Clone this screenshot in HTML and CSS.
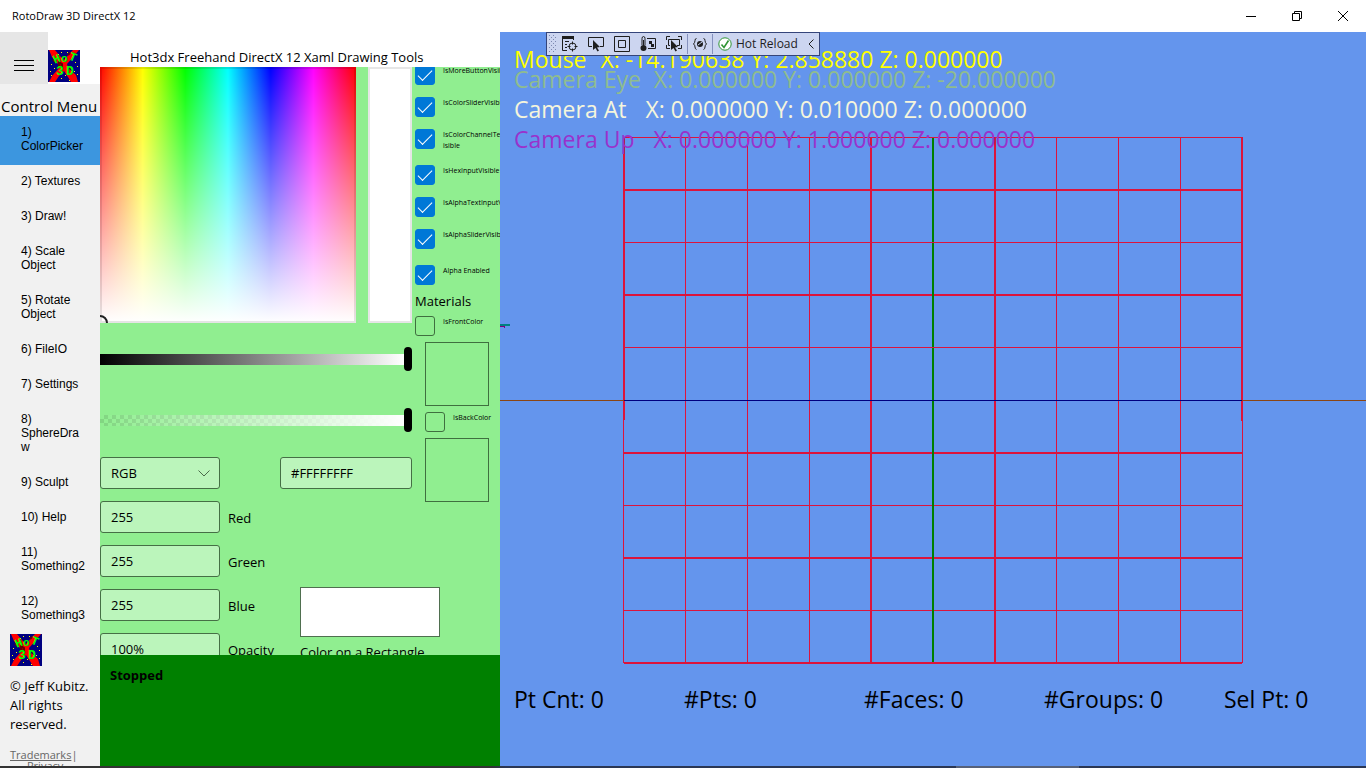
FILE: index.html
```html
<!DOCTYPE html>
<html lang="en">
<head>
<meta charset="utf-8">
<title>RotoDraw 3D DirectX 12</title>
<link rel="stylesheet" href="styles.css">
</head>
<body>
<svg class="defs" aria-hidden="true">
  <symbol id="logo" viewBox="0 0 32 32">
    <rect width="32" height="32" fill="#000080"/>
    <path d="M1 0h6l5 6 4 4 6-7 3-3h6l-5 6-7 8 1 4 8 7 2 7h-7l-3-5-4-6-5 5-4 6H1l3-6 7-8-1-4-6-7z" fill="#f00"/>
    <path d="M11 12l3 2v3h-3zM21 16l3 3M5 10l3 2M20 5l2-2" stroke="#600" stroke-width="2" fill="#900"/>
    <path d="M13 2h1v1h-1zM19 2h1v1h-1zM10 4h1v1h-1zM3 14h1v1H3zM6 18h1v1H6zM27 12h1v1h-1zM29 16h1v1h-1zM2 21h1v1H2zM13 28h1v1h-1zM17 25h1v1h-1zM21 30h1v1h-1zM29 24h1v1h-1zM26 21h1v1h-1zM3 25h1v1H3z" fill="#ff0"/>
    <g fill="#0f0" font-family="Liberation Mono, monospace" font-weight="bold">
      <text x="5" y="13" font-size="12" transform="rotate(-22 8 9)">H</text>
      <text x="13" y="12" font-size="11">o</text>
      <text x="21" y="11" font-size="12" transform="rotate(22 25 8)">T</text>
      <text x="8" y="25" font-size="13">3</text>
      <text x="18" y="25" font-size="13">D</text>
    </g>
  </symbol>
</svg>

<header class="titlebar">
  <h1 class="titlebar-name">RotoDraw 3D DirectX 12</h1>
  <div class="window-buttons">
    <button type="button" aria-label="Minimize"><svg width="10" height="10" viewBox="0 0 10 10"><path d="M0 5.500h10"/></svg></button>
    <button type="button" aria-label="Restore"><svg width="10" height="10" viewBox="0 0 10 10"><path d="M.5 2.500h7v7h-7zM2.500 2.500v-2h7v7h-2"/></svg></button>
    <button type="button" aria-label="Close"><svg width="10" height="10" viewBox="0 0 10 10"><path d="M0 0l10 10M10 0L0 10"/></svg></button>
  </div>
</header>

<main class="app">
  <aside class="sidebar">
    <div class="sidebar-head">
      <button class="menu-button" type="button" aria-label="Menu"><svg width="20" height="12" viewBox="0 0 20 12"><path d="M0 .5h20M0 5.500h20M0 10.500h20"/></svg></button>
      <svg class="logo" role="img" aria-label="Hot 3D"><use href="#logo"/></svg>
    </div>
    <h2 class="menu-title">Control Menu</h2>
    <nav class="menu">
      <a class="menu-item is-active" href="#">1) ColorPicker</a>
      <a class="menu-item" href="#">2) Textures</a>
      <a class="menu-item" href="#">3) Draw!</a>
      <a class="menu-item" href="#">4) Scale Object</a>
      <a class="menu-item" href="#">5) Rotate Object</a>
      <a class="menu-item" href="#">6) FileIO</a>
      <a class="menu-item" href="#">7) Settings</a>
      <a class="menu-item" href="#">8) SphereDra<wbr>w</a>
      <a class="menu-item" href="#">9) Sculpt</a>
      <a class="menu-item" href="#">10) Help</a>
      <a class="menu-item" href="#">11) Something2</a>
      <a class="menu-item" href="#">12) Something3</a>
    </nav>
    <div class="legal">
      <svg class="logo" role="img" aria-label="Hot 3D"><use href="#logo"/></svg>
      <p class="copyright">© Jeff Kubitz. All rights reserved.</p>
      <p class="legal-links"><a href="#">Trademarks</a>|<br><a class="privacy" href="#">Privacy</a></p>
    </div>
  </aside>

  <section class="tools">
    <h2 class="tools-title">Hot3dx Freehand DirectX 12 Xaml Drawing Tools</h2>
    <div class="picker">
      <div class="picker-main">
        <div class="spectrum-row">
          <div class="spectrum"><span class="spectrum-handle"></span></div>
          <div class="third-dimension"></div>
        </div>
        <input class="slider slider-value" type="range" min="0" max="100" value="100" aria-label="Value">
        <input class="slider slider-alpha" type="range" min="0" max="100" value="100" aria-label="Alpha">
        <div class="mode-row">
          <span class="select-wrap">
            <select class="field" aria-label="Color model"><option>RGB</option><option>HSV</option></select>
            <svg class="chevron" width="12" height="7" viewBox="0 0 12 7"><path d="M.5.5L6 6 11.500.5"/></svg>
          </span>
          <input class="field field-hex" type="text" value="#FFFFFFFF" aria-label="Hex color">
        </div>
        <div class="channel-area">
          <div class="channels">
            <div class="channel"><input class="field" id="red" type="text" value="255"><label for="red">Red</label></div>
            <div class="channel"><input class="field" id="green" type="text" value="255"><label for="green">Green</label></div>
            <div class="channel"><input class="field" id="blue" type="text" value="255"><label for="blue">Blue</label></div>
            <div class="channel"><input class="field" id="opacity" type="text" value="100%"><label for="opacity">Opacity</label></div>
          </div>
          <div class="preview">
            <div class="preview-box"></div>
            <p class="preview-label">Color on a Rectangle</p>
          </div>
        </div>
      </div>
      <div class="options">
        <label class="option"><input type="checkbox" checked><span>IsMoreButtonVisible</span></label>
        <label class="option"><input type="checkbox" checked><span>IsColorSliderVisible</span></label>
        <label class="option option-tall"><input type="checkbox" checked><span>IsColorChannelTextInputV<br>isible</span></label>
        <label class="option"><input type="checkbox" checked><span>IsHexInputVisible</span></label>
        <label class="option"><input type="checkbox" checked><span>IsAlphaTextInputVisible</span></label>
        <label class="option option-tall"><input type="checkbox" checked><span>IsAlphaSliderVisible</span></label>
        <label class="option"><input type="checkbox" checked><span>Alpha Enabled</span></label>
        <h3 class="materials-title">Materials</h3>
        <label class="option option-material"><input type="checkbox"><span>IsFrontColor</span></label>
        <div class="swatch"></div>
        <label class="option option-material option-back"><input type="checkbox"><span>IsBackColor</span></label>
        <div class="swatch"></div>
      </div>
    </div>
    <div class="status" role="status">Stopped</div>
  </section>

  <section class="scene">
    <svg class="scene-grid" viewBox="500 32 866 734" preserveAspectRatio="none" shape-rendering="crispEdges" role="img" aria-label="Drawing grid">
      <g fill="#dc143c">
        <path d="M623 137h2v283h-2zM623 420h1v243h-1zM685 137h1v526h-1zM747 137h1v526h-1zM809 137h1v526h-1zM870 137h2v526h-2zM994 137h2v526h-2zM1056 137h1v526h-1zM1118 137h1v526h-1zM1180 137h1v526h-1zM1241 137h2v284h-2zM1242 421h1v242h-1z"/>
        <path d="M624 137h618v1H624zM624 189h618v2H624zM624 242h618v1H624zM624 294h618v2H624zM624 347h618v1H624zM624 452h618v2H624zM624 505h618v1H624zM624 557h618v2H624zM624 610h618v1H624z"/>
      </g>
      <path d="M932 138h2v524h-2z" fill="#008000"/>
      <path d="M624 242h618v1H624zM624 347h618v1H624zM624 662h618v2H624z" fill="#dc143c"/>
      <path d="M500 400h124v1H500zM1242 400h124v1h-124z" fill="#8b4513"/>
      <path d="M624 400h618v1H624z" fill="#000080"/>
      <path d="M500 324h10v2h-10z" fill="#008080"/>
      <path d="M500 326h5v2h-1v-1h-4z" fill="#800080"/>
    </svg>
    <div class="hud">
      <dl class="readouts">
        <div class="readout mouse"><dt>Mouse</dt><dd>X: -14.190638 Y: 2.858880 Z: 0.000000</dd></div>
        <div class="readout eye"><dt>Camera Eye</dt><dd>X: 0.000000 Y: 0.000000 Z: -20.000000</dd></div>
        <div class="readout at"><dt>Camera At</dt><dd>X: 0.000000 Y: 0.010000 Z: 0.000000</dd></div>
        <div class="readout up"><dt>Camera Up</dt><dd>X: 0.000000 Y: 1.000000 Z: 0.000000</dd></div>
      </dl>
      <div class="counts">
        <span>Pt Cnt: 0</span><span>#Pts: 0</span><span>#Faces: 0</span><span>#Groups: 0</span><span>Sel Pt: 0</span>
      </div>
    </div>
    <div class="debug-bar" role="toolbar" aria-label="Debug">
      <svg class="grip" width="7" height="18" viewBox="0 0 7 18"><path d="M0 0h1v1H0zM4 0h1v1H4zM2 2h1v1H2zM6 2h1v1H6zM0 4h1v1H0zM4 4h1v1H4zM2 6h1v1H2zM6 6h1v1H6zM0 8h1v1H0zM4 8h1v1H4zM2 10h1v1H2zM6 10h1v1H6zM0 12h1v1H0zM4 12h1v1H4zM2 14h1v1H2zM6 14h1v1H6zM0 16h1v1H0zM4 16h1v1H4z"/></svg>
      <button type="button" aria-label="Go to live visual tree"><svg width="16" height="16" viewBox="0 0 16 16"><path class="fill" d="M0 0h12v3H0z"/><path d="M.5 2v12.500H5M11.500 2v2M3 5.500h4M3 8.500h2M3 11.500h2"/><circle cx="10.500" cy="10.500" r="3.500"/><path d="M10.500 5.500v3M10.500 12.500v3M5.500 10.500h3M12.500 10.500h3"/></svg></button>
      <button type="button" aria-label="Select element"><svg width="16" height="16" viewBox="0 0 16 16"><path d="M4 10.500H.5v-9h15v9H12"/><path class="fill" d="M5 4l7 7-3 .5 2 3-1.500 1-2-3.500L5 14z"/></svg></button>
      <button type="button" aria-label="Display layout adorners"><svg width="16" height="16" viewBox="0 0 16 16"><path d="M.5.5h15v15H.5zM4.500 4.500h7v7h-7z"/></svg></button>
      <button type="button" aria-label="Track focused element"><svg width="16" height="16" viewBox="0 0 16 16"><path d="M2 9V2.500Q2 .5 3.500.5T5 2.500V9"/><circle class="fill" cx="3.500" cy="12" r="3"/><path d="M3.500 4v6M7 2.500h8.500v10H8"/><path class="fill" d="M9 5h3v3H9zM11 8h3v3h-3z"/></svg></button>
      <button type="button" aria-label="Select focused element"><svg width="16" height="16" viewBox="0 0 16 16"><path d="M.5 4V.5H4M12 .5h3.500V4M15.500 9v3.500H12M.5 9v3.500H4M4 9.500H2.500v-6h11v6H11"/><path class="fill" d="M5 4l7 7-3 .5 2 3-1.500 1-2-3.500L5 14z"/></svg></button>
      <span class="divider"></span>
      <button type="button" aria-label="Binding failures"><svg width="14" height="12" viewBox="0 0 14 12"><path d="M3.500.5Q2 .5 2 2.500T.5 6Q2 7 2 9t1.500 2.500M10.500.5Q12 .5 12 2.500T13.500 6Q12 7 12 9t-1.500 2.500"/><circle class="fill" cx="7" cy="6" r="3"/><path class="light" d="M5 7l4-3"/></svg></button>
      <span class="divider"></span>
      <button class="hot-reload" type="button"><svg width="14" height="14" viewBox="0 0 14 14"><circle cx="7" cy="7" r="6.200" fill="#fff" stroke="#2f9434"/><path d="M3.500 7.500l2.500 3 4.500-7" stroke="#2f9434" stroke-width="1.600"/></svg>Hot Reload</button>
      <button class="collapse" type="button" aria-label="Collapse"><svg width="6" height="10" viewBox="0 0 6 10"><path d="M5.500.5L1 5l4.500 4.500"/></svg></button>
    </div>
  </section>
</main>
<div class="taskbar-edge"></div>
</body>
</html>
```

FILE: styles.css
```css
* { box-sizing: border-box; }

body {
  margin: 0;
  height: 100vh;
  display: flex;
  flex-direction: column;
  overflow: hidden;
  background: #fff;
  color: #000;
  font: 13px/18px "Open Sans", "Noto Sans", sans-serif;
}

h1, h2, h3, p, dl, dd { margin: 0; font-weight: 400; }
button { border: 0; padding: 0; background: none; font: inherit; color: inherit; }
svg { display: block; fill: none; stroke: #000; }
symbol, use { stroke: none; }
.defs { display: none; }

/* Title bar */
.titlebar {
  display: flex;
  flex: none;
  height: 32px;
  align-items: center;
  justify-content: space-between;
  padding-left: 12px;
}
.titlebar-name { font-size: 11px; }
.window-buttons { display: flex; }
.window-buttons button { display: grid; width: 46px; height: 32px; place-items: center; }

.app { display: flex; flex: 1; min-height: 0; }

/* Sidebar */
.sidebar {
  display: flex;
  flex: none;
  flex-direction: column;
  width: 100px;
  overflow: hidden;
  background: #f1f1f1;
}
.sidebar-head { display: flex; flex: none; height: 52px; align-items: flex-end; background: #fff; }
.sidebar-head .logo { margin-bottom: 2px; }
.menu-button { display: grid; width: 48px; height: 52px; place-items: center; padding-top: 16px; background: #e6e6e6; }
.logo { flex: none; width: 32px; height: 32px; stroke: none; }
.menu-title { flex: none; height: 32px; padding: 13px 0 0 1px; font-size: 15px; line-height: 19px; white-space: nowrap; }
.menu-item {
  display: block;
  padding: 9px 14px 12px 21px;
  color: #000;
  font: 12px/14px "Liberation Sans", Arial, sans-serif;
  text-decoration: none;
}
.is-active { background: #3c96df; }
.legal { padding-left: 10px; }
.copyright { margin-top: 11px; line-height: 19px; }
.legal-links { margin-top: 15px; color: #666; font-size: 11px; line-height: 11px; }
.legal-links a { color: #666; }
.legal-links .privacy { margin-left: 17px; }

/* Drawing tools */
.tools { display: flex; flex: none; flex-direction: column; width: 400px; overflow: hidden; }
.tools-title { flex: none; height: 35px; padding: 16px 0 0 30px; font-size: 13px; white-space: nowrap; }
.picker { display: flex; flex: 1; gap: 3px; min-height: 0; overflow: hidden; background: #90ee90; }
.picker-main { flex: none; width: 312px; }
.spectrum-row { display: flex; height: 256px; justify-content: space-between; }
.spectrum {
  position: relative;
  width: 256px;
  overflow: hidden;
  background:
    linear-gradient(rgba(255, 255, 255, 0), #fff),
    linear-gradient(90deg, #f00, #ff0, #0f0, #0ff, #00f, #f0f, #f00);
  box-shadow: inset 0 0 0 2px rgba(0, 0, 0, .1);
}
.spectrum-handle {
  position: absolute;
  left: -8px;
  bottom: -8px;
  width: 16px;
  height: 16px;
  border: 2px solid #222;
  border-radius: 50%;
}
.third-dimension { width: 44px; border: 2px solid #e6e6e6; background: #fff; }

.slider { display: block; width: 312px; height: 24px; margin: 24px 0 0; appearance: none; background: none; }
.slider-alpha { margin-top: 37px; }
.slider::-webkit-slider-runnable-track { height: 11px; }
.slider-value::-webkit-slider-runnable-track { background: linear-gradient(90deg, #000, #fff) 0 0 / 304px 11px no-repeat; }
.slider-alpha::-webkit-slider-runnable-track {
  background:
    linear-gradient(90deg, rgba(255, 255, 255, 0), #fff) 0 0 / 304px 11px no-repeat,
    repeating-conic-gradient(rgba(0, 0, 0, .1) 0 25%, transparent 0 50%) 0 0 / 8px 8px;
}
.slider::-webkit-slider-thumb { width: 8px; height: 24px; margin-top: -7px; appearance: none; border-radius: 4px; background: #000; }

.field {
  width: 120px;
  height: 32px;
  padding: 0 10px;
  border: 1px solid #456f45;
  border-radius: 3px;
  background: #bbf5bb;
  color: #000;
  font: inherit;
  appearance: none;
}
.field-hex { width: 132px; }
.mode-row { display: flex; justify-content: space-between; margin-top: 25px; }
.select-wrap { position: relative; }
.chevron { position: absolute; top: 13px; right: 10px; stroke: #4a6a4a; pointer-events: none; }
.channel-area { display: flex; margin-top: 12px; }
.channels { display: grid; flex: none; width: 200px; gap: 12px; }
.channel { display: flex; gap: 8px; align-items: center; }
.channel label { padding-top: 2px; }
.preview { flex: none; width: 140px; padding-top: 86px; }
.preview-box { height: 50px; border: 1px solid #4f6f4f; background: #fff; }
.preview-label { margin-top: 6px; }

/* The list is scrolled slightly, so its first row starts above the panel edge */
.options { flex: 1; min-width: 0; margin-top: -2px; }
.option {
  display: flex;
  height: 32px;
  gap: 8px;
  font-size: 7px;
  line-height: 11px;
  white-space: nowrap;
}
.option-tall { height: 36px; }
.option input {
  flex: none;
  width: 20px;
  height: 20px;
  margin: 0;
  appearance: none;
  border: 1px solid #3f6f3f;
  border-radius: 3px;
}
.option input:checked { position: relative; border-color: #0078d7; background: #0078d7; }
.option input:checked::after {
  content: "";
  position: absolute;
  top: 3px;
  left: 5px;
  width: 13px;
  height: 6px;
  border: solid #fff;
  border-width: 0 0 1px 1px;
  transform: translate(-3px, 1px) rotate(-45deg);
}
.materials-title { height: 19px; font-size: 13px; line-height: 8px; }
.option-material { height: 26px; }
.option-back { margin: 6px 0 0 10px; }
.swatch { width: 64px; height: 64px; margin-left: 10px; border: 1px solid #3f6f3f; }

.status { flex: none; height: 111px; padding: 11px 10px; background: #008000; font-weight: 700; }

/* 3D scene */
.scene { position: relative; flex: 1; min-width: 0; overflow: hidden; background: #6495ed; }
.scene-grid { width: 100%; height: 100%; stroke: none; }
.hud {
  position: absolute;
  inset: 0;
  display: flex;
  flex-direction: column;
  justify-content: space-between;
  padding: 12px 0 52px 14px;
  font-size: 23px;
  line-height: 30px;
  white-space: nowrap;
}
.readout { display: flex; gap: 19px; }
.mouse { height: 20px; gap: 14px; color: #ff0; }
.eye { gap: 13px; color: #8fbc8f; }
.at { color: #f5f5dc; }
.up { color: #9932cc; }
.counts { display: grid; grid-template-columns: 170fr 180fr 180fr 180fr 142fr; }

.debug-bar {
  position: absolute;
  top: 0;
  left: 46px;
  display: flex;
  height: 24px;
  align-items: center;
  gap: 10px;
  padding: 0 5px 0 2px;
  border: 1px solid #35457a;
  background: #ccd5f0;
  color: #1e1e1e;
  font-size: 12px;
}
.debug-bar svg { stroke: #1e1e1e; }
.debug-bar .fill { fill: #1e1e1e; stroke: none; }
.debug-bar .light { stroke: #ccd5f0; }
.debug-bar .grip { fill: #7d88b0; stroke: none; margin-right: -4px; }
.divider { width: 1px; height: 20px; background: #8591bd; margin: 0 -5px; }
.hot-reload { display: flex; gap: 4px; align-items: center; white-space: nowrap; }

.taskbar-edge { flex: none; height: 2px; background: linear-gradient(90deg, #333 0 36%, #2b3754 37% 70%, #56617a 70% 79%, #2b3754 79%); }
```
